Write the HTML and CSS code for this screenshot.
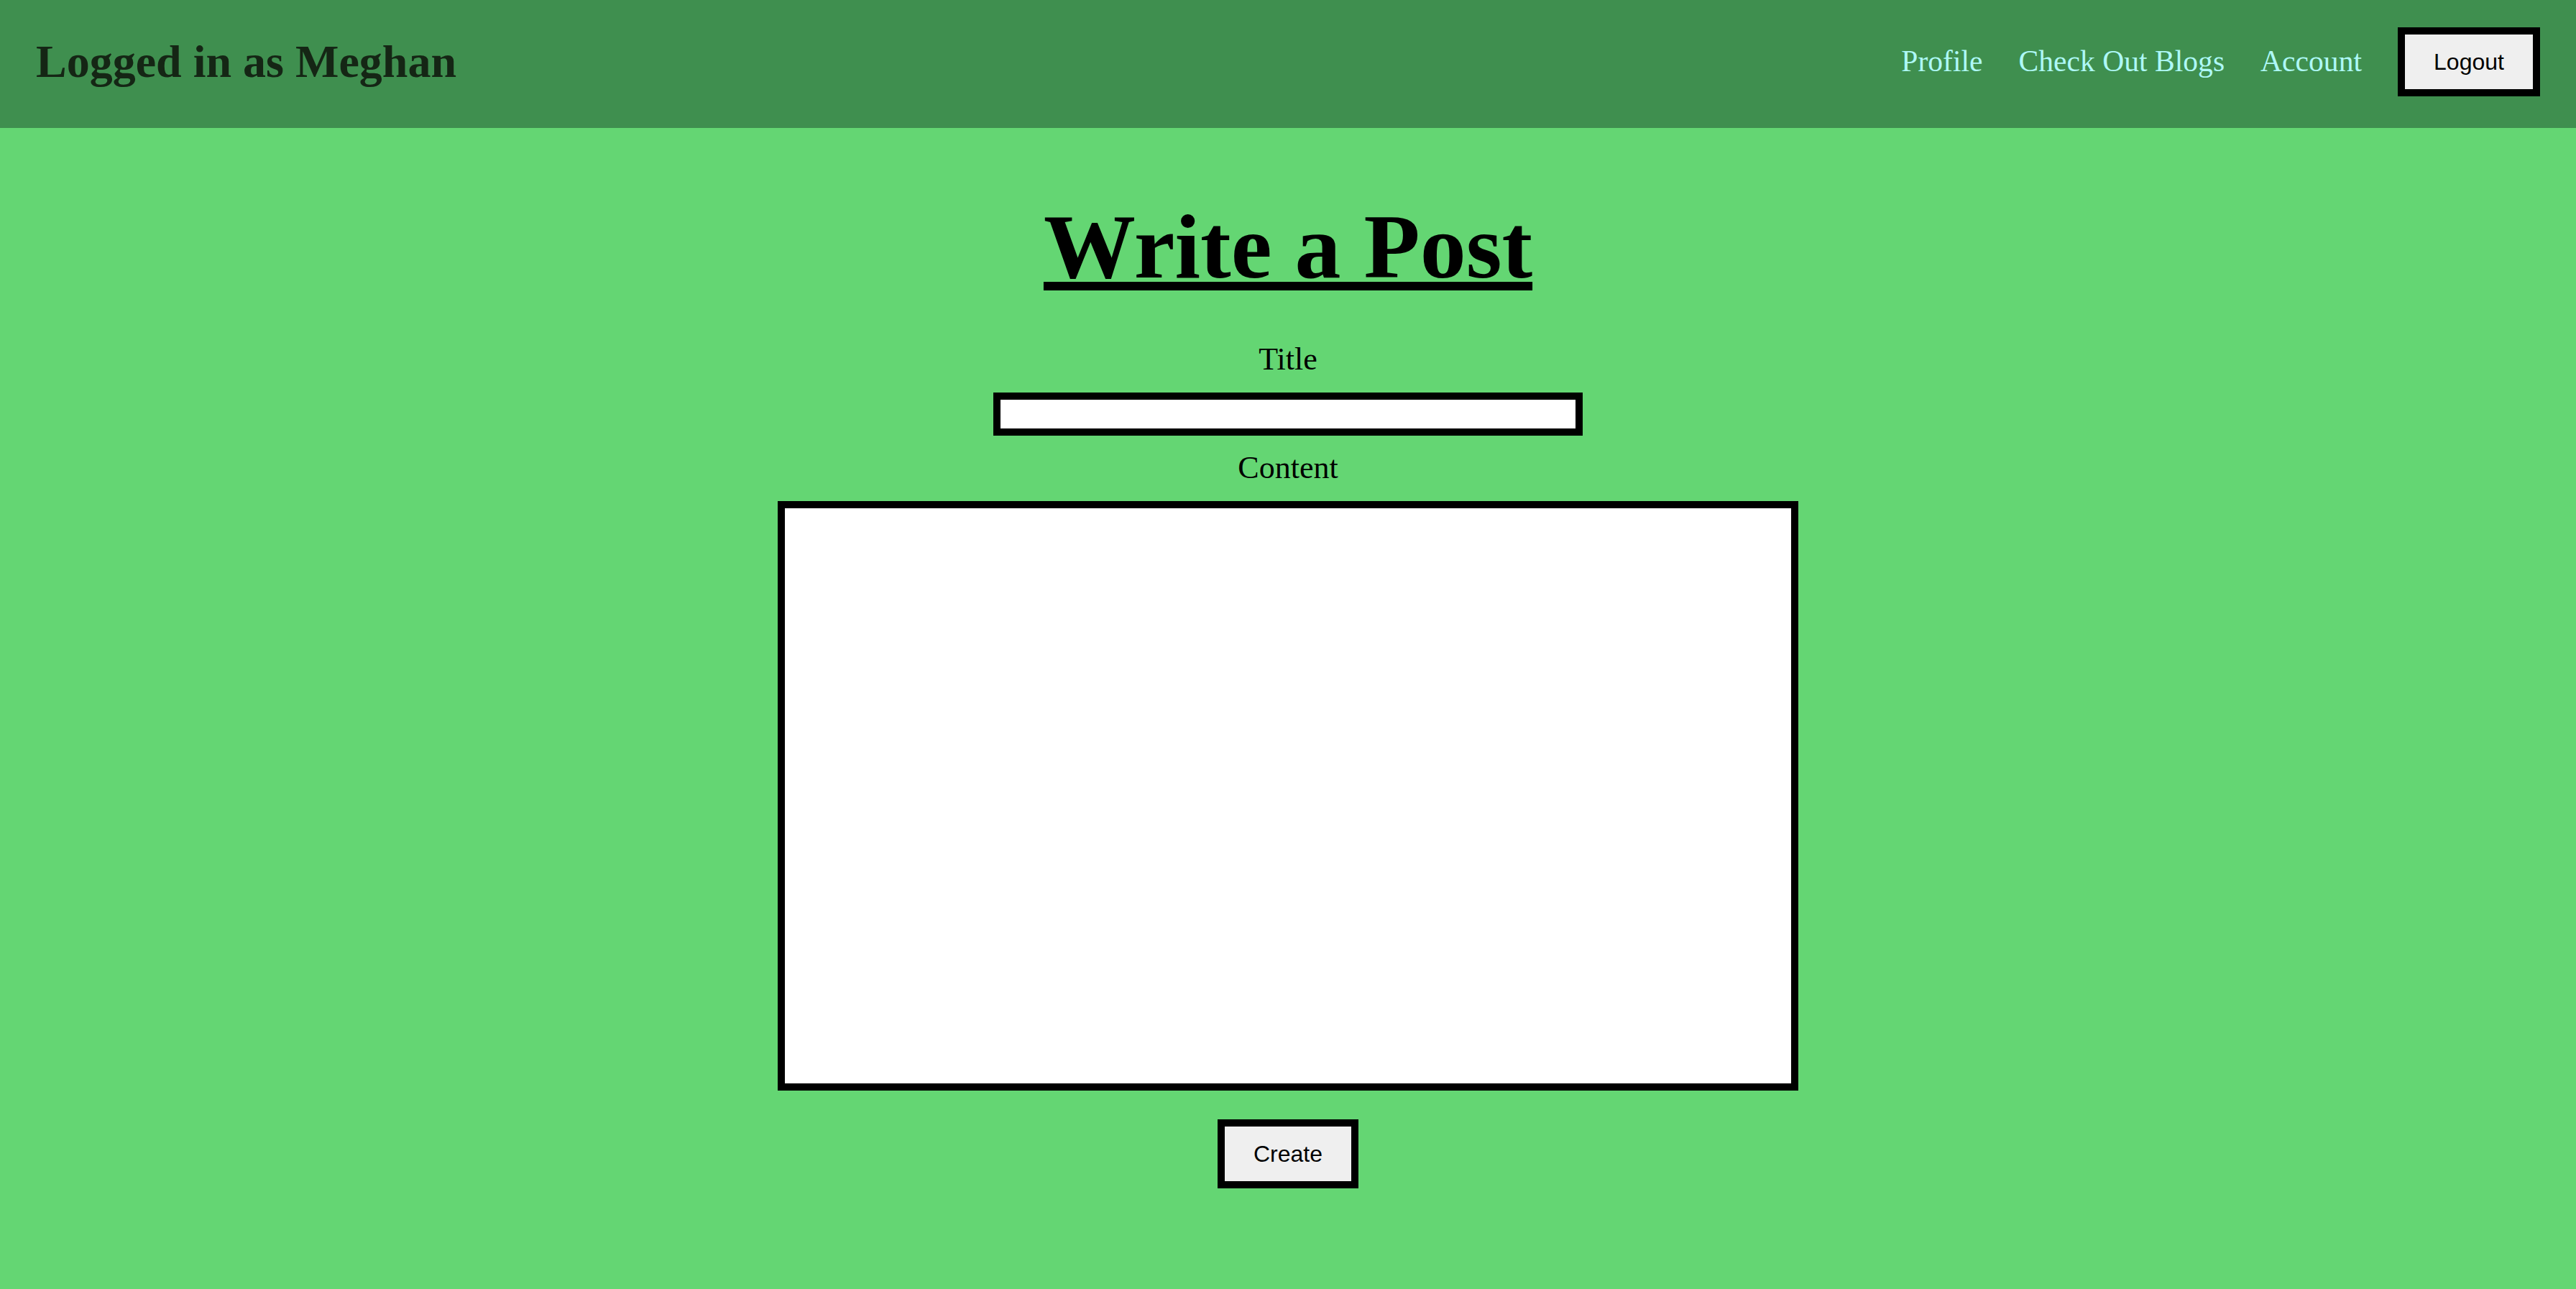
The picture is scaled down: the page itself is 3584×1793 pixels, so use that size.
FILE: index.html
```html
<!DOCTYPE html>
<html lang="en">
<head>
<meta charset="utf-8">
<title>Write a Post</title>
<link rel="stylesheet" href="styles.css">
</head>
<body>
<nav class="topbar">
  <h1 class="who">Logged in as Meghan</h1>
  <div class="links">
    <a class="nav-link" href="#">Profile</a>
    <a class="nav-link" href="#">Check Out Blogs</a>
    <a class="nav-link" href="#">Account</a>
    <button class="btn" type="button">Logout</button>
  </div>
</nav>
<main class="page">
  <h1 class="page-title">Write a Post</h1>
  <form class="post-form">
    <label class="field-label label-title" for="title">Title</label>
    <input class="title-input" id="title" type="text">
    <label class="field-label label-content" for="content">Content</label>
    <textarea class="content-input" id="content"></textarea>
    <button class="btn create-btn" type="submit">Create</button>
  </form>
</main>
</body>
</html>
```

FILE: styles.css
```css
html, body {
  margin: 0;
  padding: 0;
}

body {
  background: #64d673;
  min-height: 100vh;
  font-family: "Liberation Serif", "Times New Roman", serif;
  color: #000;
}

.topbar {
  height: 178px;
  box-sizing: border-box;
  background: #3f8f4f;
  display: flex;
  align-items: center;
  justify-content: space-between;
  padding: 0 50px 6px 50px;
}

.who {
  margin: 0;
  font-size: 64px;
  font-weight: bold;
  line-height: 1.15;
  color: #152615;
}

.links {
  display: flex;
  align-items: center;
  gap: 50px;
}

.nav-link {
  font-size: 41.6px;
  line-height: 1.15;
  color: #aef8f6;
  text-decoration: none;
}

.btn {
  font-family: "Liberation Sans", Arial, sans-serif;
  font-size: 32px;
  line-height: 1.15;
  color: #000;
  background: #efefef;
  border: 10px solid #000;
  border-radius: 0;
  padding: 0;
  width: 198px;
  height: 96px;
  box-sizing: border-box;
  cursor: pointer;
}

.page {
  display: flex;
  flex-direction: column;
  align-items: center;
}

.page-title {
  margin: 92px 0 0 0;
  font-size: 128px;
  font-weight: bold;
  line-height: 1.15;
  text-decoration: underline;
  text-decoration-thickness: 12px;
  text-underline-offset: 6px;
}

.post-form {
  display: flex;
  flex-direction: column;
  align-items: center;
}

.field-label {
  font-size: 44px;
  line-height: 1.15;
}

.label-title {
  margin-top: 58px;
}

.title-input {
  margin-top: 20px;
  width: 820px;
  height: 60px;
  box-sizing: border-box;
  border: 10px solid #000;
  border-radius: 0;
  background: #fff;
  padding: 0 4px;
  font-size: 32px;
}

.label-content {
  margin-top: 20px;
}

.content-input {
  margin-top: 21px;
  width: 1420px;
  height: 820px;
  box-sizing: border-box;
  border: 10px solid #000;
  border-radius: 0;
  background: #fff;
  resize: none;
  padding: 4px;
  font-size: 32px;
  display: block;
}

.create-btn {
  margin-top: 40px;
  width: 196px;
}
```
